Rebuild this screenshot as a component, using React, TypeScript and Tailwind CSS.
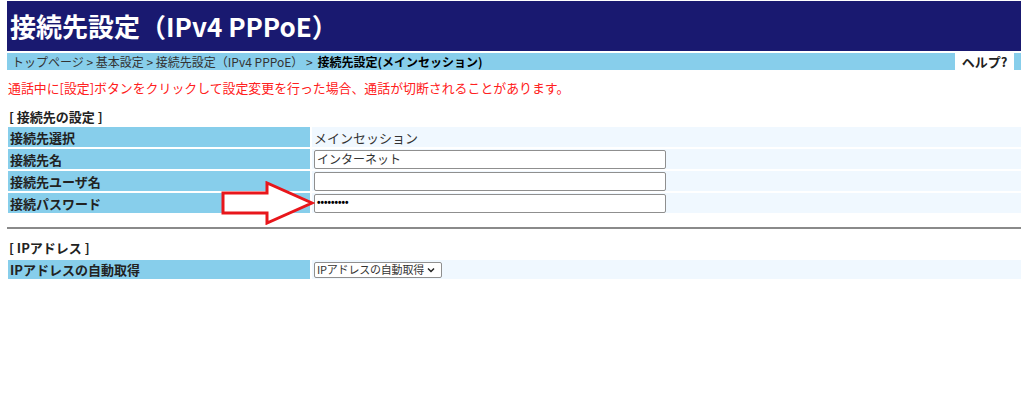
import React from "react";

const font = { fontFamily: '"Noto Sans CJK JP", "Noto Sans", sans-serif' };

function Row({ label, children }: { label: string; children: React.ReactNode }) {
  return (
    <div className="flex h-[20px] gap-[2px]">
      <div className="w-[302px] bg-[#87ceeb] pl-[2px] flex items-center text-[13px] font-bold text-[#222] leading-none">
        {label}
      </div>
      <div className="flex-1 bg-[#f0f8ff] flex items-center pl-[2px]">{children}</div>
    </div>
  );
}

function TextBox({ value, mono }: { value: string; mono?: boolean }) {
  return (
    <div className="w-[352px] h-[19px] border border-[#8f8f8f] rounded-[2px] bg-white flex items-center px-[2px] text-[12px] text-[#333] leading-none">
      {mono ? (
        <span
          className="text-[10px] font-bold text-black"
          style={{ fontFamily: '"Liberation Sans", Arial, sans-serif' }}
        >
          {value}
        </span>
      ) : (
        <span>{value}</span>
      )}
    </div>
  );
}

export default function App() {
  return (
    <div className="bg-white w-[1024px] h-[420px] overflow-hidden pt-px" style={font}>
      <div className="ml-[7px] w-[1014px]">
        <div className="h-[50px] bg-[#191970] flex items-center pl-[3px]">
          <h1 className="text-[26px] font-bold text-white leading-none">接続先設定（IPv4 PPPoE）</h1>
        </div>
        <div className="mt-[2px] h-[17px] flex">
          <div className="flex-1 bg-[#87ceeb] flex items-center pl-[5px] text-[12px] text-[#333] leading-none whitespace-pre">
            <span>トップページ &gt; 基本設定 &gt; 接続先設定（IPv4 PPPoE） &gt; </span>
            <span className="font-bold text-black ml-[2px]">接続先設定(メインセッション)</span>
          </div>
          <div className="w-[59px] bg-white flex items-center justify-center text-[13px] font-bold text-[#222] leading-none">
            ヘルプ?
          </div>
          <div className="w-[7px] bg-[#87ceeb]" />
        </div>
        <div className="pl-px mt-[9px] h-[18px] flex items-center text-[12.9px] text-[#ff2020] leading-none whitespace-nowrap">
          通話中に[設定]ボタンをクリックして設定変更を行った場合、通話が切断されることがあります。
        </div>
        <div className="pl-[2px] mt-[10px] h-[18px] flex items-center text-[13px] font-bold text-[#222] leading-none">
          [ 接続先の設定 ]
        </div>
        <div className="relative mt-[2px] pl-px flex flex-col gap-[2px]">
          <Row label="接続先選択">
            <span className="text-[13px] text-[#333] leading-none">メインセッション</span>
          </Row>
          <Row label="接続先名">
            <TextBox value="インターネット" />
          </Row>
          <Row label="接続先ユーザ名">
            <TextBox value="" />
          </Row>
          <Row label="接続パスワード">
            <TextBox value="•••••••••" mono />
          </Row>
          <svg
            className="absolute left-[214px] top-[54px]"
            width="94"
            height="44"
            viewBox="0 0 94 44"
          >
            <polygon
              points="2,12 46,12 46,2 91,22 46,42 46,32 2,32"
              fill="white"
              stroke="#e8161b"
              strokeWidth="3"
              strokeLinejoin="miter"
            />
          </svg>
        </div>
        <div className="mt-[14px] h-[2px] bg-[#8a8a8a]" />
        <div className="pl-[2px] mt-[9px] h-[18px] flex items-center text-[13px] font-bold text-[#222] leading-none">
          [ IPアドレス ]
        </div>
        <div className="mt-[4px] pl-px">
          <div className="flex h-[19px] gap-[2px]">
            <div className="w-[302px] bg-[#87ceeb] pl-[2px] flex items-center text-[13px] font-bold text-[#222] leading-none">
              IPアドレスの自動取得
            </div>
            <div className="flex-1 bg-[#f0f8ff] flex items-center pl-[2px]">
              <div className="h-[16px] w-[128px] border border-[#8f8f8f] rounded-[2px] bg-white flex items-center pl-[2px] text-[11px] text-[#333] leading-none whitespace-nowrap">
                <span className="tracking-[-0.2px]">IPアドレスの自動取得</span>
                <svg className="ml-[3px] shrink-0" width="8" height="6" viewBox="0 0 8 6">
                  <path d="M1 1.5 L4 4.5 L7 1.5" fill="none" stroke="#222" strokeWidth="1.5" />
                </svg>
              </div>
            </div>
          </div>
        </div>
      </div>
    </div>
  );
}
